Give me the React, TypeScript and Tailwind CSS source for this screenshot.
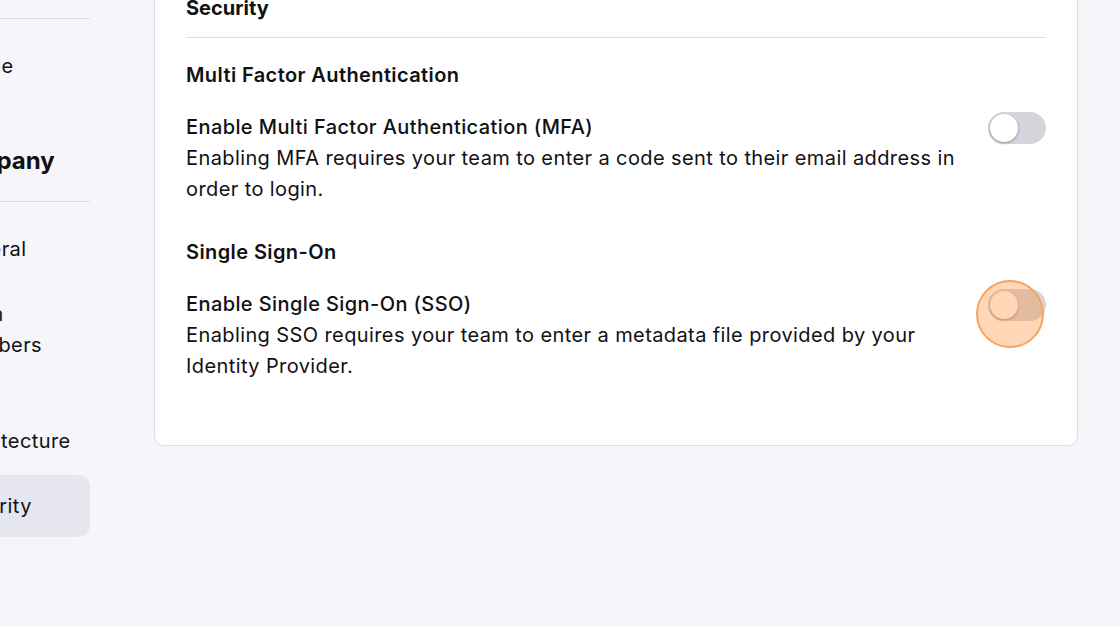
import React from "react";

function Toggle({ highlight }: { highlight?: boolean }) {
  return (
    <div className="relative shrink-0 w-[58px] h-[32px]">
      <div className="w-[58px] h-[32px] rounded-full bg-[#d5d5de] relative">
        <div className="absolute left-[2px] top-[2px] w-[28px] h-[28px] rounded-full bg-white shadow-[0_1px_3px_rgba(0,0,0,0.35)]" />
      </div>
      {highlight && (
        <div className="absolute left-[-12px] top-[-9px] w-[68px] h-[68px] rounded-full bg-[rgba(255,140,50,0.35)] border-2 border-[#f5a35e]" />
      )}
    </div>
  );
}

function NavItem({ label, active }: { label: string; active?: boolean }) {
  return (
    <div
      className={
        "pl-[8px] pr-[12px] py-[15.5px] rounded-[12px] text-[20px] leading-[31px] tracking-[0.4px] text-[#111114] " +
        (active ? "bg-[#e6e6f1]" : "")
      }
    >
      {label}
    </div>
  );
}

function Setting({
  heading,
  title,
  desc,
  highlight,
}: {
  heading: string;
  title: string;
  desc: string;
  highlight?: boolean;
}) {
  return (
    <div className="flex flex-col">
      <div className="text-[20px] leading-[31px] font-semibold tracking-[0.4px] text-[#111114]">{heading}</div>
      <div className="mt-[21px] flex items-start gap-3">
        <div className="flex-1 flex flex-col">
          <div className="text-[20px] leading-[31px] font-medium tracking-[0.4px] text-[#111114]">{title}</div>
          <div className="text-[20px] leading-[31px] tracking-[0.4px] text-[#111114]">{desc}</div>
        </div>
        <Toggle highlight={highlight} />
      </div>
    </div>
  );
}

export default function App() {
  return (
    <div
      className="w-[1120px] h-[626px] overflow-hidden bg-[#f5f5fa] flex items-start"
      style={{ fontFamily: "Inter, 'Noto Sans', sans-serif" }}
    >
      <aside className="w-[148px] ml-[-58px] shrink-0 flex flex-col mt-[-39px]">
        <div className="text-[24px] leading-[32px] font-bold text-[#111114] pb-[25px] border-b border-[#dcdce4]">
          Account
        </div>
        <div className="mt-[16px] flex flex-col">
          <NavItem label="Profile" />
        </div>
        <div className="mt-[48px] text-[24px] leading-[32px] font-bold text-[#111114] pb-[24px] border-b border-[#dcdce4]">
          Company
        </div>
        <div className="mt-[16px] flex flex-col gap-[3px]">
          <NavItem label="General" />
          <NavItem label="Team Members" />
          <NavItem label="Data Architecture" />
          <NavItem label="Security" active />
        </div>
      </aside>
      <main className="ml-[64px] w-[924px] shrink-0 mt-[-40px]">
        <div className="bg-white border border-[#dcdce3] rounded-[10px] px-[31px] pt-[33px] pb-[63px]">
          <div className="text-[20px] leading-[28px] font-bold text-[#111114] pb-[15px] border-b border-[#dcdce3]">
            Security
          </div>
          <div className="mt-[22px] flex flex-col gap-[32px]">
            <Setting
              heading="Multi Factor Authentication"
              title="Enable Multi Factor Authentication (MFA)"
              desc="Enabling MFA requires your team to enter a code sent to their email address in order to login."
            />
            <Setting
              heading="Single Sign-On"
              title="Enable Single Sign-On (SSO)"
              desc="Enabling SSO requires your team to enter a metadata file provided by your Identity Provider."
              highlight
            />
          </div>
        </div>
      </main>
    </div>
  );
}
